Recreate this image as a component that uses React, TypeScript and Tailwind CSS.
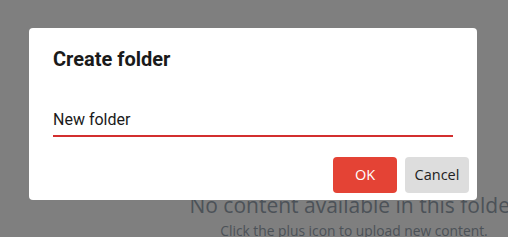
export default function App() {
  return (
    <div className="relative h-[237px] w-[508px] overflow-hidden bg-white">
      <div className="flex h-full">
        <div className="w-[200px] shrink-0" />
        <div className="flex min-w-0 flex-1 flex-col items-center pt-[191px]" style={{ fontFamily: '"Open Sans", sans-serif' }}>
          <p className="whitespace-nowrap text-[21px] font-normal leading-[28px] text-[#98a4b0]">
            No content available in this folder
          </p>
          <p className="mt-[3px] whitespace-nowrap text-[13.8px] leading-[18px] text-[#98a4b0]">
            Click the plus icon to upload new content.
          </p>
        </div>
      </div>

      <div className="absolute inset-0 bg-black/50">
        <div className="ml-[29px] mt-[28px] h-[172px] w-[448px] rounded-[4px] bg-white px-[24px] pt-[17px]" style={{ fontFamily: 'Roboto, sans-serif' }}>
          <h2 className="text-[20px] font-bold leading-[28px] text-[#1a1a1a]">Create folder</h2>
          <div className="mt-[37px] border-b-2 border-[#d32f2f] pb-[5px]">
            <span className="block text-[16px] leading-[20px] text-[#1a1a1a]">New folder</span>
          </div>
          <div className="-mr-[16px] mt-[20px] flex justify-end gap-[8px]" style={{ fontFamily: '"Open Sans", sans-serif' }}>
            <button className="h-[36px] w-[64px] rounded-[4px] bg-[#e44335] text-[14.5px] text-white">OK</button>
            <button className="h-[36px] w-[64px] rounded-[4px] bg-[#dddddd] text-[14.5px] text-[#222]">Cancel</button>
          </div>
        </div>
      </div>
    </div>
  )
}
